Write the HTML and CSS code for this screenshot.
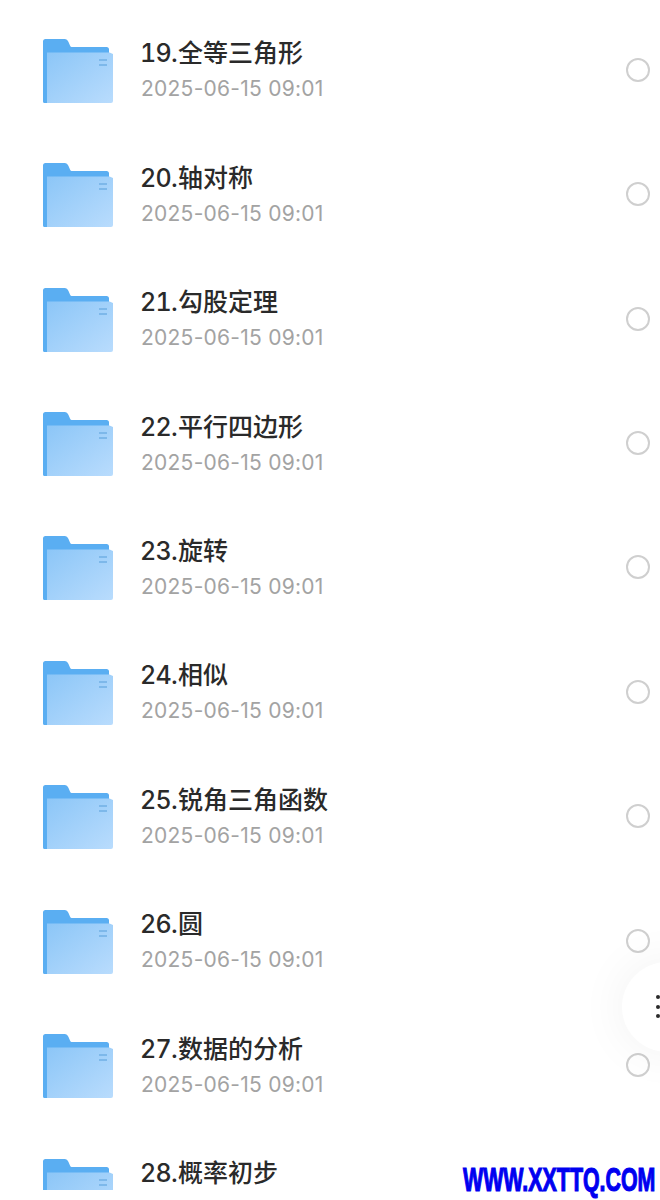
FILE: index.html
```html
<!DOCTYPE html>
<html lang="zh">
<head>
<meta charset="utf-8">
<title>文件列表</title>
<link rel="stylesheet" href="styles.css">
</head>
<body>
<svg class="defs" width="0" height="0" aria-hidden="true">
  <defs>
    <linearGradient id="front" x1="0" y1="0" x2="1" y2="1">
      <stop offset="0" stop-color="#8cc6f7"/>
      <stop offset="1" stop-color="#b9dcfd"/>
    </linearGradient>
    <symbol id="folder" viewBox="0 0 70 64">
      <path d="M0 2.500A2.500 2.500 0 0 1 2.500 0H21.500C23.500 0 24.500 1 25.500 3L27 6.500C27.500 7.500 28 8 29.500 8H63.500A2.500 2.500 0 0 1 66 10.500V14H4V64H1.500A1.500 1.500 0 0 1 0 62.500Z" fill="#5aaef2"/>
      <path d="M4 13.500H66.500L70 15V62A2 2 0 0 1 68 64H4Z" fill="url(#front)"/>
      <rect x="56" y="20" width="8" height="2" fill="#7db8ea"/>
      <rect x="56" y="25" width="8" height="2" fill="#7db8ea"/>
    </symbol>
  </defs>
</svg>
<main class="list">
  <div class="row"><svg class="folder"><use href="#folder"/></svg><div class="info"><div class="name"><span class="num">19.</span>全等三角形</div><div class="date">2025-06-15 09:01</div></div><span class="radio"></span></div>
  <div class="row"><svg class="folder"><use href="#folder"/></svg><div class="info"><div class="name"><span class="num">20.</span>轴对称</div><div class="date">2025-06-15 09:01</div></div><span class="radio"></span></div>
  <div class="row"><svg class="folder"><use href="#folder"/></svg><div class="info"><div class="name"><span class="num">21.</span>勾股定理</div><div class="date">2025-06-15 09:01</div></div><span class="radio"></span></div>
  <div class="row"><svg class="folder"><use href="#folder"/></svg><div class="info"><div class="name"><span class="num">22.</span>平行四边形</div><div class="date">2025-06-15 09:01</div></div><span class="radio"></span></div>
  <div class="row"><svg class="folder"><use href="#folder"/></svg><div class="info"><div class="name"><span class="num">23.</span>旋转</div><div class="date">2025-06-15 09:01</div></div><span class="radio"></span></div>
  <div class="row"><svg class="folder"><use href="#folder"/></svg><div class="info"><div class="name"><span class="num">24.</span>相似</div><div class="date">2025-06-15 09:01</div></div><span class="radio"></span></div>
  <div class="row"><svg class="folder"><use href="#folder"/></svg><div class="info"><div class="name"><span class="num">25.</span>锐角三角函数</div><div class="date">2025-06-15 09:01</div></div><span class="radio"></span></div>
  <div class="row"><svg class="folder"><use href="#folder"/></svg><div class="info"><div class="name"><span class="num">26.</span>圆</div><div class="date">2025-06-15 09:01</div></div><span class="radio"></span></div>
  <div class="row"><svg class="folder"><use href="#folder"/></svg><div class="info"><div class="name"><span class="num">27.</span>数据的分析</div><div class="date">2025-06-15 09:01</div></div><span class="radio"></span></div>
  <div class="row"><svg class="folder"><use href="#folder"/></svg><div class="info"><div class="name"><span class="num">28.</span>概率初步</div></div></div>
</main>
<div class="fab"><span class="dot"></span><span class="dot"></span><span class="dot"></span></div>
<div class="bottom-fade"></div>
<div class="watermark">WWW.XXTTQ.COM</div>
</body>
</html>
```
FILE: styles.css
```css
html, body {
  margin: 0;
  padding: 0;
  width: 660px;
  height: 1200px;
  overflow: hidden;
  background: #fff;
  font-family: Inter, "Noto Sans CJK SC", sans-serif;
}
.defs { position: absolute; }
.list {
  display: flex;
  flex-direction: column;
  padding-top: 8.5px;
}
.row {
  flex: none;
  display: flex;
  align-items: center;
  height: 124.44px;
  box-sizing: border-box;
  padding: 0 10px 0 43px;
}
.row:last-child { align-items: flex-start; padding-top: 30.500px; }
.folder {
  flex: none;
  width: 70px;
  height: 64px;
}
.info {
  flex: 1;
  margin-left: 28px;
  display: flex;
  flex-direction: column;
  gap: 8px;
}
.name {
  font-size: 25px;
  line-height: 29px;
  font-weight: 500;
  color: #2a2a2a;
}
.num {
  font-variant-numeric: tabular-nums;
  letter-spacing: -0.7px;
  margin-left: -1px;
  margin-right: 1px;
}
.date {
  font-size: 21px;
  line-height: 26px;
  letter-spacing: 0.25px;
  color: #a3a3a3;
}
.radio {
  flex: none;
  width: 24px;
  height: 24px;
  margin-bottom: 2px;
  box-sizing: border-box;
  border: 2px solid #cfcfcf;
  border-radius: 50%;
}
.fab {
  position: absolute;
  left: 622px;
  top: 962px;
  width: 90px;
  height: 90px;
  border-radius: 50%;
  background: #fff;
  box-shadow: 0 0 50px rgba(0, 0, 0, 0.06);
  display: flex;
  flex-direction: column;
  gap: 5.700px;
  padding: 33px 0 0 34px;
  box-sizing: border-box;
}
.dot {
  flex: none;
  width: 4px;
  height: 4px;
  border-radius: 50%;
  background: #2b2b2b;
}
.bottom-fade {
  position: absolute;
  left: 0;
  right: 0;
  bottom: 0;
  height: 10px;
  background: #fff;
}
.watermark {
  position: absolute;
  left: 463px;
  top: 1161px;
  font-family: "Liberation Sans", sans-serif;
  font-weight: 700;
  font-size: 33px;
  line-height: 38px;
  color: #0000f0;
  -webkit-text-stroke: 1.2px #0000f0;
  white-space: nowrap;
  transform: scaleX(0.648);
  transform-origin: left center;
}
```
